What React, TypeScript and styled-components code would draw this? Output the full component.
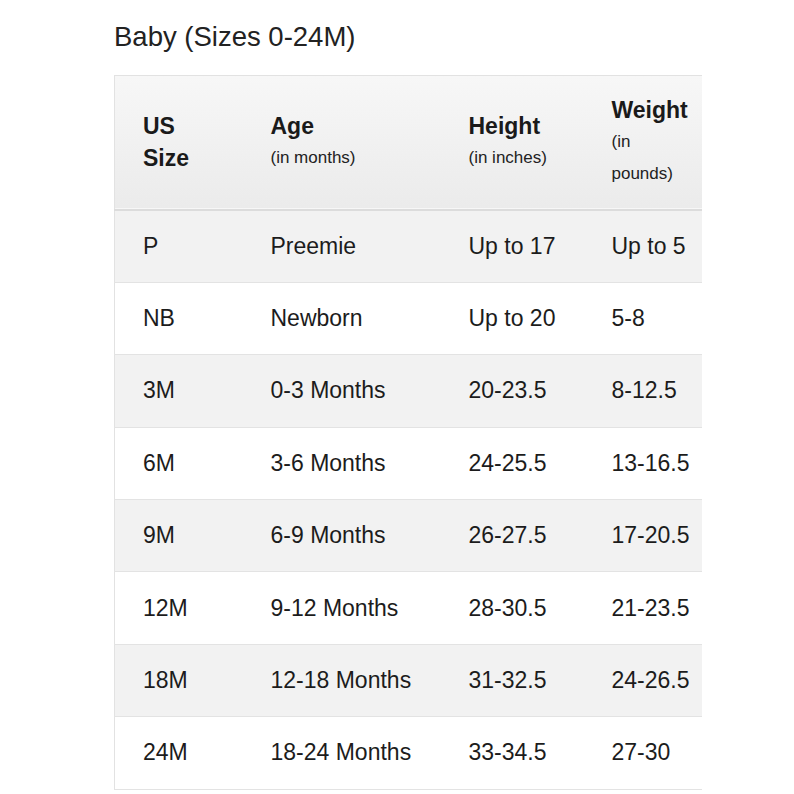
import styled, { createGlobalStyle } from 'styled-components'

const GlobalStyle = createGlobalStyle`
  body {
    margin: 0;
    background: #ffffff;
    font-family: 'Liberation Sans', Arial, sans-serif;
    color: #1c1c1c;
  }
`

const Page = styled.div`
  padding: 21px 0 0 114px;
`

const Title = styled.h2`
  margin: 0 0 23px;
  font-size: 27.5px;
  font-weight: 400;
  line-height: 31px;
  color: #222;
`

const Clip = styled.div`
  width: 588px;
  overflow: hidden;
`

const Table = styled.table`
  width: 588px;
  table-layout: fixed;
  border-collapse: collapse;
  border-left: 1px solid #e2e2e2;
  border-top: 1px solid #e2e2e2;
`

const HeadRow = styled.tr`
  background: linear-gradient(#f7f7f7, #ebebeb);
  border-bottom: 2px solid #dcdcdc;
`

const Th = styled.th<{ $w: number; $pr?: number }>`
  box-sizing: border-box;
  width: ${(p) => p.$w}px;
  height: 134px;
  padding: 0 ${(p) => p.$pr ?? 10}px 0 28px;
  text-align: left;
  vertical-align: middle;
  font-size: 23px;
  font-weight: 700;
  line-height: 32px;
  color: #1a1a1a;
`

const Sub = styled.span`
  display: block;
  font-size: 17px;
  font-weight: 400;
  line-height: 32px;
  color: #222;
`

const Row = styled.tr<{ $shade: boolean }>`
  background: ${(p) => (p.$shade ? '#f2f2f2' : '#ffffff')};
  border-bottom: 1px solid #e3e3e3;
`

const Td = styled.td`
  height: 71.4px;
  padding: 0 0 0 28px;
  font-size: 23px;
  white-space: nowrap;
  color: #1c1c1c;
`

const rows = [
  ['P', 'Preemie', 'Up to 17', 'Up to 5'],
  ['NB', 'Newborn', 'Up to 20', '5-8'],
  ['3M', '0-3 Months', '20-23.5', '8-12.5'],
  ['6M', '3-6 Months', '24-25.5', '13-16.5'],
  ['9M', '6-9 Months', '26-27.5', '17-20.5'],
  ['12M', '9-12 Months', '28-30.5', '21-23.5'],
  ['18M', '12-18 Months', '31-32.5', '24-26.5'],
  ['24M', '18-24 Months', '33-34.5', '27-30'],
]

const App = () => {
  return (
    <>
      <GlobalStyle />
      <Page>
        <Title>Baby (Sizes 0-24M)</Title>
        <Clip>
          <Table>
            <thead>
              <HeadRow>
                <Th $w={128}>
                  US
                  <br />
                  Size
                </Th>
                <Th $w={198}>
                  Age
                  <Sub>(in months)</Sub>
                </Th>
                <Th $w={143}>
                  Height
                  <Sub>(in inches)</Sub>
                </Th>
                <Th $w={119} $pr={14}>
                  Weight
                  <Sub>(in pounds)</Sub>
                </Th>
              </HeadRow>
            </thead>
            <tbody>
              {rows.map((r, i) => (
                <Row key={r[0]} $shade={i % 2 === 0}>
                  {r.map((c) => (
                    <Td key={c}>{c}</Td>
                  ))}
                </Row>
              ))}
            </tbody>
          </Table>
        </Clip>
      </Page>
    </>
  )
}

export default App
